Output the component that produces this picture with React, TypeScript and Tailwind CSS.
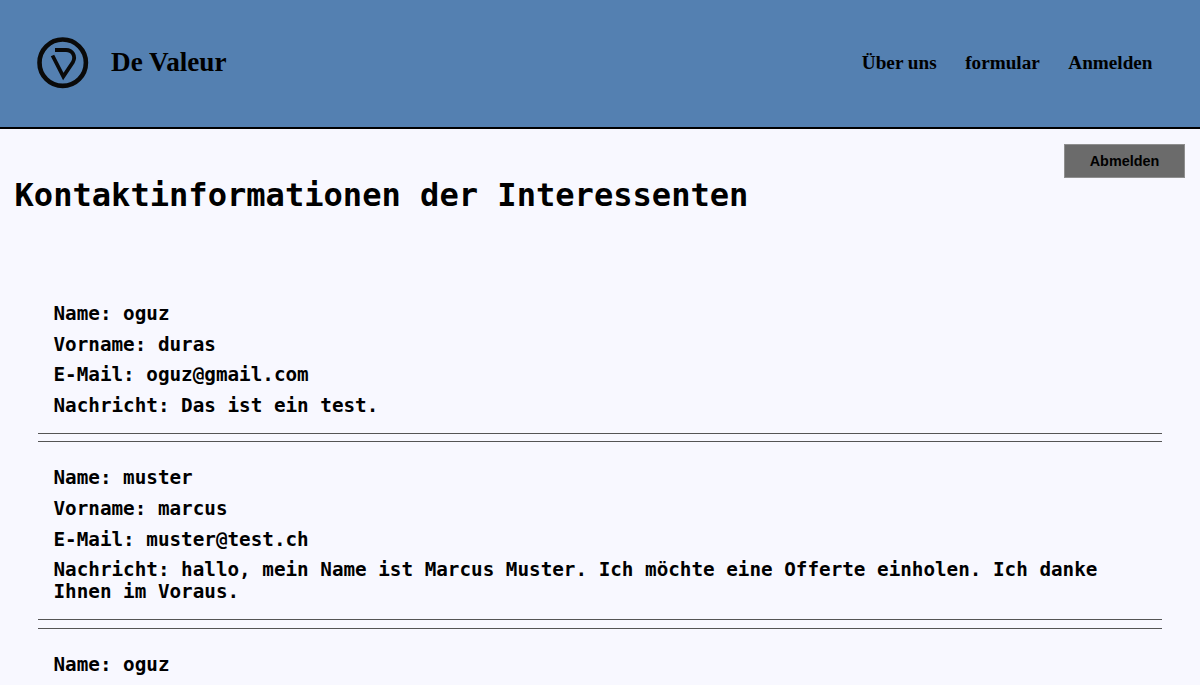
const entries = [
  { name: "oguz", vorname: "duras", email: "oguz@gmail.com", msg: "Das ist ein test." },
  { name: "muster", vorname: "marcus", email: "muster@test.ch", msg: "hallo, mein Name ist Marcus Muster. Ich möchte eine Offerte einholen. Ich danke Ihnen im Voraus." },
  { name: "oguz", vorname: "duras", email: "oguz@gmail.com", msg: "Das ist ein test." },
];

function Logo() {
  return (
    <svg width="52" height="52" viewBox="0 0 52 52" fill="none" stroke="#0a0a0a">
      <circle cx="25.7" cy="25.7" r="23.2" strokeWidth="4.6" />
      <path d="M18 13 H29 C35.5 13 39 19 36 25 L26.3 39.5 L15.5 18.5" strokeWidth="3.8" strokeLinejoin="miter" />
    </svg>
  );
}

export default function App() {
  return (
    <div className="h-[685px] overflow-hidden bg-[#f8f8ff] text-black">
      <header className="flex h-[129px] items-center justify-between border-b-2 border-black bg-[#5480b1] pl-[37px] pr-[47.5px] font-['Liberation_Serif',serif] text-[19.2px] font-bold">
        <div className="flex items-center gap-[22px] pb-[2px]">
          <Logo />
          <span className="text-[27.2px]">De Valeur</span>
        </div>
        <nav className="flex gap-[28.5px]">
          <span>Über uns</span>
          <span>formular</span>
          <span>Anmelden</span>
        </nav>
      </header>
      <main className="relative pl-[14.5px] pr-[15px] font-['DejaVu_Sans_Mono',monospace] font-bold">
        <button className="absolute right-[15px] top-[15px] h-[34px] w-[121px] border border-[#8f8f8f] bg-[#6b6b6b] pt-[1px] font-['Liberation_Sans',sans-serif] text-[14.4px] font-bold">
          Abmelden
        </button>
        <h1 className="pt-[46px] text-[32.1px] leading-[40px]">Kontaktinformationen der Interessenten</h1>
        <div className="mt-[88px] pl-[23.5px] pr-[23px]">
          {entries.map((e, i) => (
            <div key={i} className="mb-[7.5px] border-b border-[#555] pb-[16.2px] [&+div]:border-t [&+div]:border-t-[#555] [&+div]:pt-[25px]">
              <div className="flex flex-col gap-[8.6px] pl-[15.5px] text-[19.27px] leading-[22px]">
                <p>Name: {e.name}</p>
                <p>Vorname: {e.vorname}</p>
                <p>E-Mail: {e.email}</p>
                <p>Nachricht: {e.msg}</p>
              </div>
            </div>
          ))}
        </div>
      </main>
    </div>
  );
}
